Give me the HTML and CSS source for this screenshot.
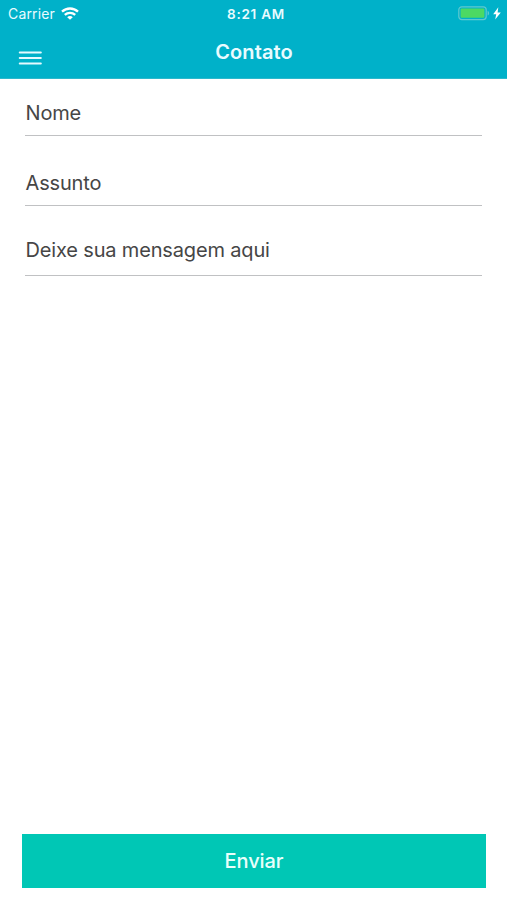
FILE: index.html
```html
<!DOCTYPE html>
<html lang="pt-BR">
<head>
<meta charset="utf-8">
<title>Contato</title>
<link rel="stylesheet" href="styles.css">
</head>
<body>
<header class="header">
  <div class="status">
    <div class="status-left">
      <span class="carrier">Carrier</span>
      <svg class="wifi" width="18" height="13" viewBox="0 0 18 13" fill="none" stroke="#fff" stroke-width="2.3">
        <path d="M1 4.7C5.5.4 12.5.4 17 4.7"/>
        <path d="M3.8 7.9c3-2.8 7.4-2.8 10.4 0"/>
        <path d="M6.2 10.2C7.8 8.7 10.2 8.7 11.8 10.2L9 12.8z" fill="#fff" stroke="none"/>
      </svg>
    </div>
    <span class="time">8:21 AM</span>
    <div class="status-right">
      <svg class="battery" width="32" height="15" viewBox="0 0 32 15">
        <rect x=".8" y=".8" width="27.4" height="12.8" rx="3" fill="none" stroke="#5fc9cf" stroke-width="1.2"/>
        <rect x="2.6" y="2.6" width="23.8" height="9.2" rx="1" fill="#4cd964"/>
        <path d="M29.6 4.8c2 .8 2 4 0 4.8z" fill="#5fc9cf"/>
      </svg>
      <svg class="bolt" width="8" height="13" viewBox="0 0 8 13" fill="#fff">
        <path d="M5.3.3.2 7.2h3L2.2 12.5 7.8 5.4H4.6z"/>
      </svg>
    </div>
  </div>
  <div class="navbar">
    <button class="menu" aria-label="Menu">
      <svg width="24" height="14" viewBox="0 0 24 14" stroke="#e5faff" stroke-width="2.1" stroke-linecap="round">
        <path d="M1.8 1.5h21M1.8 7h21M1.8 12.5h21"/>
      </svg>
    </button>
    <h1 class="title">Contato</h1>
  </div>
</header>
<main class="form">
  <div class="field"><span class="label name">Nome</span></div>
  <div class="field"><span class="label subject">Assunto</span></div>
  <div class="field message-field"><span class="label message">Deixe sua mensagem aqui</span></div>
</main>
<footer class="footer"><button class="send">Enviar</button></footer>
</body>
</html>
```
FILE: styles.css
```css
* { box-sizing: border-box; }
body {
  margin: 0;
  height: 900px;
  display: flex;
  flex-direction: column;
  overflow: hidden;
  background: #fff;
  font-family: Inter, "Liberation Sans", sans-serif;
  color: #464646;
}
.header {
  height: 79px;
  background: #00b1c9;
  border-bottom: 1px solid #2cb8cc;
  color: #e9fbff;
}
.status {
  height: 28px;
  display: grid;
  grid-template-columns: 1fr auto 1fr;
  align-items: center;
  padding: 0 6px 0 8px;
}
.status-left, .status-right { display: flex; align-items: center; }
.status-right { justify-content: flex-end; gap: 3px; }
.carrier { margin-top: -2px; font-size: 14px; letter-spacing: .15px; }
.wifi { margin: -2px 0 0 6px; }
.time { margin-left: 3px; font-size: 13.5px; font-weight: 600; letter-spacing: .75px; }
.battery { margin-top: -1px; }
.bolt { margin-top: -2px; }
.navbar {
  height: 50px;
  display: grid;
  grid-template-columns: 80px 1fr 80px;
}
.menu {
  border: 0;
  padding: 23px 0 0 18px;
  background: none;
  display: flex;
}
.title {
  margin: 0;
  padding: 11px 0 0 1px;
  text-align: center;
  font-size: 20px;
  line-height: 26px;
  font-weight: 600;
  letter-spacing: .1px;
}
.form { flex: 1; padding: 0 25px; }
.field {
  height: 70px;
  display: flex;
  align-items: flex-end;
  padding-bottom: 9px;
  border-bottom: 1px solid #c0c1c3;
}
.field:first-child { height: 57px; }
.message-field { padding-bottom: 12px; }
.label {
  padding-left: .5px;
  font-size: 20px;
  line-height: 26px;
  letter-spacing: -.16px;
}
.footer { padding: 0 21px 12px 22px; }
.send {
  display: block;
  width: 100%;
  height: 54px;
  border: 0;
  padding: 0;
  background: #00c7b5;
  color: #e9fffb;
  font: 500 20px/26px Inter, "Liberation Sans", sans-serif;
  letter-spacing: -.1px;
}
```
